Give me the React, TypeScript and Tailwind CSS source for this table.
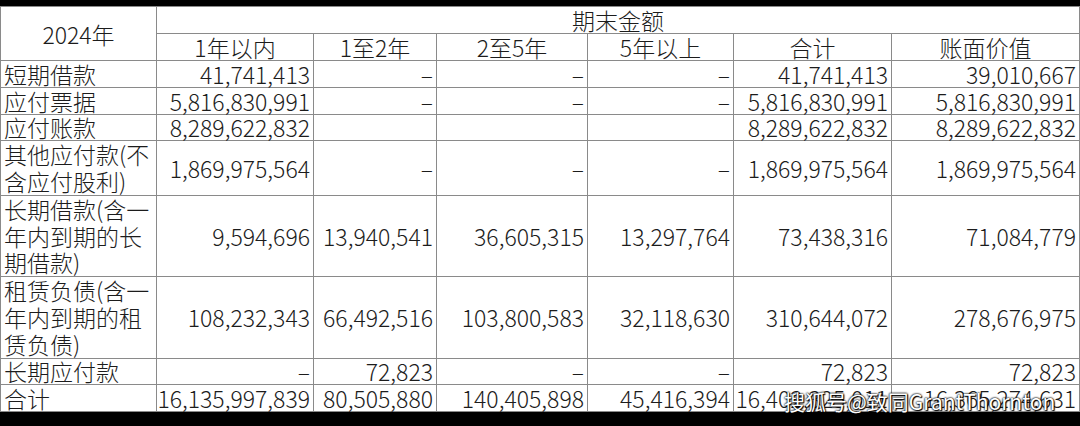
const rows: { label: React.ReactNode; lead: string; cells: string[] }[] = [
  { label: "短期借款", lead: "leading-[26px]", cells: ["41,741,413", "–", "–", "–", "41,741,413", "39,010,667"] },
  { label: "应付票据", lead: "leading-[26px]", cells: ["5,816,830,991", "–", "–", "–", "5,816,830,991", "5,816,830,991"] },
  { label: "应付账款", lead: "leading-[25px]", cells: ["8,289,622,832", "", "", "", "8,289,622,832", "8,289,622,832"] },
  {
    label: (
      <>
        其他应付款(不
        <br />
        含应付股利)
      </>
    ),
    lead: "leading-[27px]",
    cells: ["1,869,975,564", "–", "–", "–", "1,869,975,564", "1,869,975,564"],
  },
  {
    label: (
      <>
        长期借款(含一
        <br />
        年内到期的长
        <br />
        期借款)
      </>
    ),
    lead: "leading-[26.67px]",
    cells: ["9,594,696", "13,940,541", "36,605,315", "13,297,764", "73,438,316", "71,084,779"],
  },
  {
    label: (
      <>
        租赁负债(含一
        <br />
        年内到期的租
        <br />
        赁负债)
      </>
    ),
    lead: "leading-[27px]",
    cells: ["108,232,343", "66,492,516", "103,800,583", "32,118,630", "310,644,072", "278,676,975"],
  },
  { label: "长期应付款", lead: "leading-[25px]", cells: ["–", "72,823", "–", "–", "72,823", "72,823"] },
  { label: "合计", lead: "leading-[26px]", cells: ["16,135,997,839", "80,505,880", "140,405,898", "45,416,394", "16,402,325,011", "16,365,274,631"] },
];

const heads = ["1年以内", "1至2年", "2至5年", "5年以上", "合计", "账面价值"];

const cell = "border border-[#8a8a8a] p-0";

export default function App() {
  return (
    <div
      className="relative flex h-[426px] w-[1080px] flex-col overflow-hidden bg-black text-[23px] font-light text-[#1c1c1c]"
      style={{ fontFamily: '"Noto Sans CJK SC", "Noto Sans", sans-serif' }}
    >
      <div className="h-[6px] shrink-0" />
      <div className="w-[1079px] bg-white">
        <table className="w-[1079px] table-fixed border-collapse">
          <colgroup>
            <col className="w-[156px]" />
            <col className="w-[157px]" />
            <col className="w-[123px]" />
            <col className="w-[151px]" />
            <col className="w-[146px]" />
            <col className="w-[158px]" />
            <col className="w-[188px]" />
          </colgroup>
          <tbody>
            <tr>
              <td rowSpan={2} className={`${cell} text-center leading-[26px]`}>
                2024年
              </td>
              <td colSpan={6} className={`${cell} text-center leading-[26px]`}>
                期末金额
              </td>
            </tr>
            <tr>
              {heads.map((h) => (
                <td key={h} className={`${cell} text-center leading-[26px]`}>
                  {h}
                </td>
              ))}
            </tr>
            {rows.map((r, i) => (
              <tr key={i}>
                <td className={`${cell} ${r.lead} whitespace-nowrap pl-[3px] text-left`}>{r.label}</td>
                {r.cells.map((c, j) => (
                  <td key={j} className={`${cell} ${r.lead} whitespace-nowrap pr-[3px] text-right`}>
                    {c}
                  </td>
                ))}
              </tr>
            ))}
          </tbody>
        </table>
      </div>
      <div className="absolute left-[784px] top-[388px] whitespace-nowrap text-[21px] font-normal leading-[26px] text-white [text-shadow:0_0_2px_#000,0_0_2px_#000,1px_1px_1px_#000]">
        搜狐号@致同GrantThornton
      </div>
    </div>
  );
}
